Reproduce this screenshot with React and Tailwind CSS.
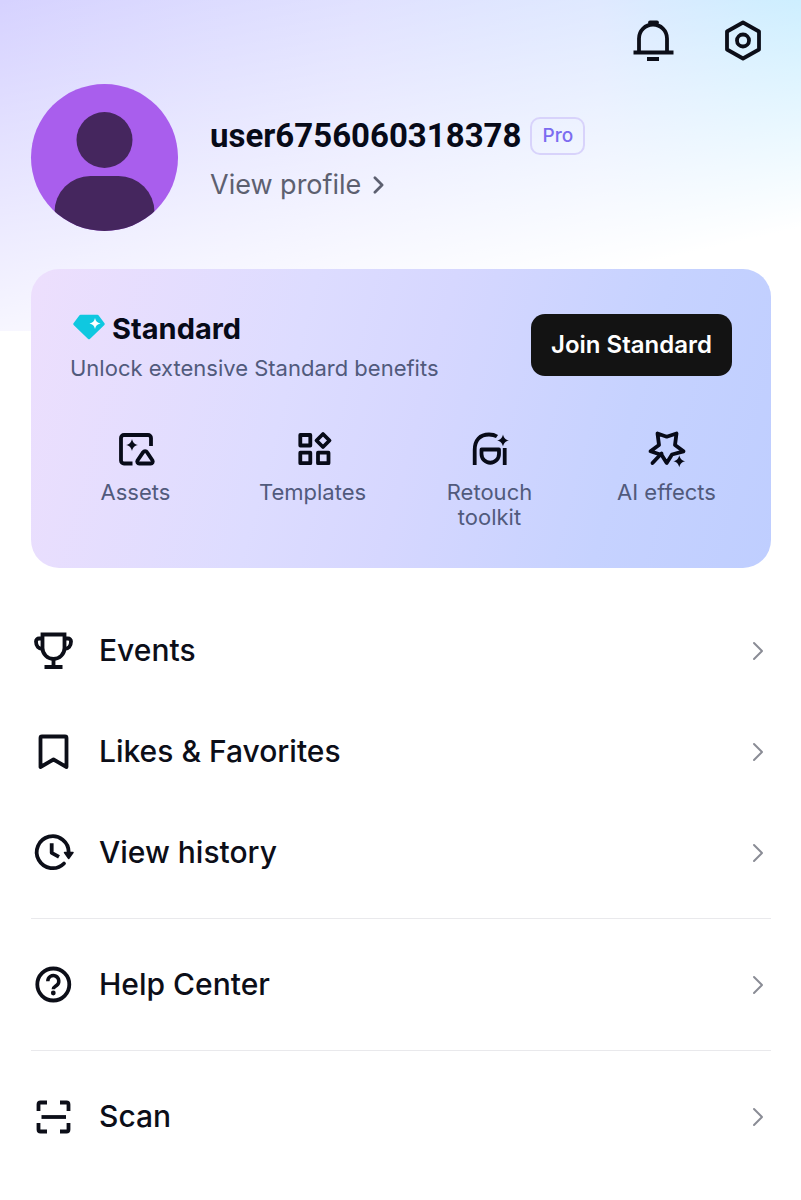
const Sparkle = ({ x, y, r = 6, fill = 'currentColor' }) => (
  <path
    transform={`translate(${x} ${y}) scale(${r})`}
    d="M0-1C.15-.4.4-.15 1 0 .4.15.15.4 0 1-.15.4-.4.15-1 0-.4-.15-.15-.4 0-1Z"
    fill={fill}
    stroke="none"
  />
);

const LineIcon = ({ box = 44, width = 3.8, className = 'size-11', children }) => (
  <svg
    viewBox={`0 0 ${box} ${box}`}
    className={`shrink-0 ${className}`}
    fill="none"
    stroke="currentColor"
    strokeWidth={width}
    strokeLinejoin="round"
    aria-hidden="true"
  >
    {children}
  </svg>
);

const Chevron = ({ className }) => (
  <svg viewBox="0 0 12 20" className={`shrink-0 ${className}`} fill="none" stroke="currentColor" strokeLinecap="round" strokeLinejoin="round" aria-hidden="true">
    <path d="M2 2l8 8-8 8" />
  </svg>
);

const features = [
  {
    label: 'Assets',
    icon: (
      <>
        <path d="M16.5 34.5H8A3 3 0 0 1 5 31.5V9a3 3 0 0 1 3-3h24a3 3 0 0 1 3 3v8" />
        <path d="M27.2 23.2a2.2 2.2 0 0 1 3.8 0l5.5 8.3a2 2 0 0 1-1.7 3H23.2a2 2 0 0 1-1.7-3Z" />
        <Sparkle x={16} y={16} />
      </>
    ),
  },
  {
    label: 'Templates',
    icon: (
      <>
        <rect x="7.3" y="6" width="10" height="10.5" />
        <rect x="7.3" y="23.7" width="10" height="10.5" />
        <rect x="25" y="23.7" width="10.5" height="10.5" />
        <path d="M30 5l6.5 6.5-6.5 6.5-6.5-6.5Z" />
      </>
    ),
  },
  {
    label: 'Retouch toolkit',
    icon: (
      <>
        <path d="M4.7 36V21C4.7 11 10 5.5 19 5.5c3.2 0 5.8.6 8 2" />
        <path d="M11.5 20.5H29V25a8.75 8.75 0 0 1-17.5 0Z" />
        <path d="M34.7 19v17" />
        <Sparkle x={33} y={11.5} />
      </>
    ),
  },
  {
    label: 'AI effects',
    icon: (
      <>
        <path d="M10.5 4.5l9.2 3.2 9.8-3.2-1.5 11.5 8.5 6.3-11.5 3.2-5.3 8.5-5-8-11.2-3.7 8.5-6.3Z" />
        <path d="M14.5 24.5L5.5 34" strokeLinecap="round" />
        <Sparkle x={32.3} y={32.3} />
      </>
    ),
  },
];

const menuGroups = [
  [
    {
      label: 'Events',
      icon: (
        <>
          <path d="M11.5 5.5h22v13.500a11 11 0 0 1-22 0Z" strokeLinejoin="miter" />
          <path d="M11 9.500H8a3 3 0 0 0-3 3c0 4.500 2.500 7.500 7 7.500M33.500 9.500h3.500a3 3 0 0 1 3 3c0 4.500-2.500 7.500-7 7.500" />
          <path d="M22.500 30v7M13.500 38h18" />
        </>
      ),
    },
    {
      label: 'Likes & Favorites',
      icon: <path d="M9.5 37V8a1.500 1.500 0 0 1 1.500-1.500h23A1.500 1.500 0 0 1 35.500 8v29l-13-7.500Z" />,
    },
    {
      label: 'View history',
      icon: (
        <>
          <path d="M33 32.500A16 16 0 1 1 37.700 21.500" strokeLinecap="round" />
          <path d="M33.500 21.500h8.500l-4.300 6Z" fill="currentColor" strokeWidth="1.5" />
          <path d="M20.700 12.300v9.500l7.300 4" />
        </>
      ),
    },
  ],
  [
    {
      label: 'Help Center',
      icon: (
        <>
          <circle cx="22.3" cy="21.5" r="16" />
          <path d="M16.800 18.200a5.500 5.500 0 1 1 8.700 4.300c-2 1.400-3.200 1.700-3.200 3.800" strokeWidth="3.5" />
          <circle cx="22.3" cy="30" r="2.4" fill="currentColor" stroke="none" />
        </>
      ),
    },
  ],
  [
    {
      label: 'Scan',
      icon: (
        <>
          <path d="M16 7.500H9.500a2 2 0 0 0-2 2V16M29 7.500h6.500a2 2 0 0 1 2 2V16M16 36.500H9.500a2 2 0 0 1-2-2V28M29 36.500h6.500a2 2 0 0 0 2-2V28" />
          <path d="M10.500 22h24.500" />
        </>
      ),
    },
  ],
];

const Avatar = () => (
  <svg viewBox="0 0 147 147" className="size-[147px] shrink-0 rounded-full bg-[#a95eed]" fill="#45265e" role="img" aria-label="Profile picture">
    <circle cx="73.5" cy="56" r="28" />
    <rect x="23.5" y="92" width="100" height="90" rx="36" />
  </svg>
);

const PlanCard = () => (
  <section className="mt-[38px] rounded-[28px] bg-[linear-gradient(105deg,#eddffd_0%,#dddcff_35%,#d6d7ff_52%,#c6d2ff_78%,#bfceff_100%)] px-4 pt-[45px] pb-[38px]">
    <div className="flex items-start justify-between px-[23px]">
      <div>
        <h2 className="flex items-center gap-1 font-[Inter,sans-serif] text-[29px] leading-[30px] font-bold text-[#070a18]">
          <svg viewBox="0 0 38 30" className="h-[30px] w-[38px] shrink-0" aria-hidden="true">
            <path d="M10.5 2h17l6 8L19 24 4.500 10Z" fill="#0fc8e0" stroke="#0fc8e0" strokeWidth="2.5" strokeLinejoin="round" />
            <Sparkle x={25} y={9.5} r={5.5} fill="#fff" />
          </svg>
          Standard
        </h2>
        <p className="mt-[9px] text-[22px] leading-[30px] text-[#515a7c]">Unlock extensive Standard benefits</p>
      </div>
      <button className="h-[62px] shrink-0 rounded-[14px] bg-[#131313] px-5 text-[24px] font-semibold text-white">
        Join Standard
      </button>
    </div>

    <div className="mt-[46px] grid grid-cols-4">
      {features.map((feature) => (
        <button key={feature.label} className="flex flex-col items-center gap-[11px] text-[#070a18]">
          <LineIcon box={40} width={3.8} className="size-10">
            {feature.icon}
          </LineIcon>
          <span className="max-w-[120px] text-[22px] leading-[25px] text-[#515a7c]">{feature.label}</span>
        </button>
      ))}
    </div>
  </section>
);

const MenuRow = ({ label, icon }) => (
  <li>
    <button className="flex h-[101px] w-full items-center gap-6 pr-[7px] text-left text-[30px] font-medium">
      <LineIcon>{icon}</LineIcon>
      <span className="grow">{label}</span>
      <Chevron className="h-5 w-3 stroke-2 text-[#8a8c95]" />
    </button>
  </li>
);

const App = () => {
  return (
    <div className="min-h-screen bg-white bg-[linear-gradient(167deg,rgba(255,255,255,0)_0%,#fff_80%),linear-gradient(90deg,#d6d2ff_0%,#d9daff_45%,#cfdeff_75%,#a6e2ff_100%)] bg-[length:100%_331px] bg-no-repeat font-[Inter,sans-serif] text-[#0c0e18]">
      <header className="flex justify-end gap-[46px] pt-[19px] pr-9">
        <button aria-label="Notifications">
          <LineIcon>
            <path d="M8 33V19.500a14 14 0 0 1 28 0V33" />
            <path d="M2.500 33.500h40M16 40h12" />
            <path d="M19 3.500h7" strokeLinecap="round" />
          </LineIcon>
        </button>
        <button aria-label="Settings">
          <LineIcon>
            <path d="M22 3.500l16 9v18l-16 9-16-9v-18Z" />
            <circle cx="22" cy="21.5" r="6" />
          </LineIcon>
        </button>
      </header>

      <main className="pr-[30px] pb-8 pl-[31px]">
        <div className="mt-[21px] flex items-center gap-8">
          <Avatar />
          <div className="mt-1">
            <div className="flex items-center gap-[9px]">
              <h1 className="font-[Roboto,sans-serif] text-[33px] leading-[38px] font-bold text-[#070a18]">user6756060318378</h1>
              <span className="rounded-[10px] border-2 border-[#d8d3fb] px-[10px] text-[19px] leading-[34px] font-medium text-[#7c6cf0]">Pro</span>
            </div>
            <a href="#profile" className="mt-3 flex items-center gap-3 text-[27px] leading-[36px] text-[#5d6070]">
              View profile
              <Chevron className="h-[18px] w-[11px] stroke-3" />
            </a>
          </div>
        </div>

        <PlanCard />

        <nav className="mt-8">
          {menuGroups.map((group, i) => (
            <ul key={i} className={i > 0 ? 'mt-[15px] border-t border-[#e9e9ec] pt-[15px]' : ''}>
              {group.map((item) => (
                <MenuRow key={item.label} {...item} />
              ))}
            </ul>
          ))}
        </nav>
      </main>
    </div>
  );
};

export default App;
